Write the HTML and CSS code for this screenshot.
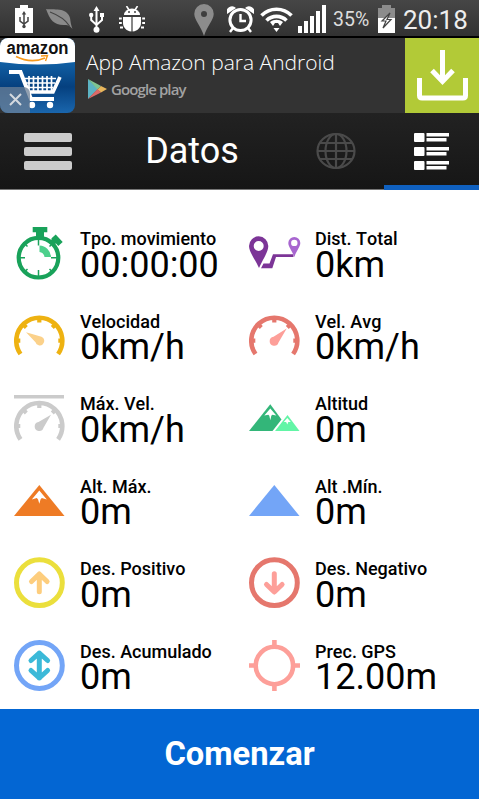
FILE: index.html
```html
<!DOCTYPE html>
<html lang="es">
<head>
  <meta charset="UTF-8">
  <meta name="viewport" content="width=device-width, initial-scale=1.0">
  <title>Datos</title>
  <link rel="stylesheet" href="styles.css">
</head>
<body>
  <!-- shared shapes -->
  <svg class="defs" width="0" height="0">
    <defs>
      <g id="gauge">
        <path d="M6.5 44A23 23 0 1 1 44.1 44" fill="none" stroke="currentColor" stroke-width="4.6"/>
        <path d="M3 30.7h3.300M44.300 30.7h3.300M10 15.3l2.300 2.300M40.6 15.3l-2.300 2.300M25.3 9v3.600" stroke="currentColor" stroke-width="4.2"/>
      </g>
    </defs>
  </svg>

  <div class="status-bar">
    <div class="status-left">
      <svg class="s-battery-usb" width="18" height="28" viewBox="0 0 18 28">
        <path d="M5 0h8v3h5v25H0V3h5z" fill="#fff"/>
        <path d="M9 8v14M5 12v4l4 3 4-3v-4" fill="none" stroke="#444" stroke-width="1.5"/>
        <path d="M9 6l2.2 3.5H6.8z" fill="#444"/><circle cx="9" cy="21.5" r="1.7" fill="#444"/>
      </svg>
      <svg class="s-leaf" width="27" height="22" viewBox="0 0 27 22">
        <path d="M0 1C7 2 21-1 24 10c.6 3 .5 5 2.5 11-3-4-5-4-9-4C8 17 4 12 0 1z" fill="#8a8a8a"/>
        <path d="M4 4c8 3 15 7 19.5 14" fill="none" stroke="#444" stroke-width="1.2"/>
      </svg>
      <svg class="s-usb" width="15" height="27" viewBox="0 0 15 27">
        <path d="M7.5 3v21M2.200 9v5l5.3 5L13 14V9" fill="none" stroke="#fff" stroke-width="2"/>
        <path d="M7.5 0l3 5h-6zM11 7h4v4h-4z" fill="#fff"/><circle cx="2.2" cy="9" r="2.2" fill="#fff"/><circle cx="7.5" cy="23.8" r="3" fill="#fff"/>
      </svg>
      <svg class="s-bug" width="26" height="26" viewBox="0 0 26 26">
        <path d="M5 9a8 6.500 0 0 1 16 0z" fill="#fff"/>
        <path d="M7.500 0l2.500 4M18.500 0L16 4" stroke="#fff" stroke-width="1.6"/>
        <path d="M0 12.500h2.800M23.200 12.500H26M0 17h2.800M23.200 17H26M1 21.500h3M22 21.500h3" stroke="#fff" stroke-width="2.200"/>
        <path d="M4 11h8.400v14.500C7 25 4 21 4 17zM13.600 11H22v6c0 4-3 8-8.400 8.500z" fill="#fff"/>
        <circle cx="10" cy="6" r="1" fill="#444"/><circle cx="16" cy="6" r="1" fill="#444"/>
      </svg>
    </div>
    <div class="status-right">
      <svg class="s-pin" width="20" height="32" viewBox="0 0 20 32">
        <path fill-rule="evenodd" d="M10 0a9.7 9.7 0 0 1 9.7 10C19.7 16 13 22 10 32 7 22 .3 16 .3 10A9.7 9.7 0 0 1 10 0zm0 7a3 3 0 1 0 0 6 3 3 0 0 0 0-6z" fill="#8c8c8c"/>
      </svg>
      <svg class="s-alarm" width="27" height="27" viewBox="0 0 27 27">
        <circle cx="13.5" cy="14" r="10.600" fill="none" stroke="#fff" stroke-width="3"/>
        <path d="M13.5 8v7h5.5M6 22l-3 4M21 22l3 4" fill="none" stroke="#fff" stroke-width="2.4"/>
        <path d="M0 8a5.5 5.5 0 0 1 9-6zM27 8a5.5 5.5 0 0 0-9-6z" fill="#fff"/>
      </svg>
      <svg class="s-wifi" width="33" height="26" viewBox="0 0 33 26">
        <path d="M1.5 9.5a21 21 0 0 1 30 0M6.5 14.5a14.2 14.2 0 0 1 20 0" fill="none" stroke="#fff" stroke-width="3.6"/>
        <path d="M10 16c4-3 9-3 13 0l-3 4-2-3h-3l-2 3zM13.5 22h6l-3 4z" fill="#fff"/>
      </svg>
      <svg class="s-signal" width="28" height="28" viewBox="0 0 28 28">
        <path d="M0 21h4v7H0zM6 16h4v12H6zM12 11h4v17h-4zM18 6h4v22h-4zM24 0h4v28h-4z" fill="#fff"/>
      </svg>
      <span class="percent">35%</span>
      <svg class="s-battery" width="17" height="28" viewBox="0 0 17 28">
        <path d="M4 0h9v3h4v10H0V3h4z" fill="#8c8c8c"/><path d="M0 13h17v15H0z" fill="#fff"/>
        <path d="M12 8l-8 8h4l-3 7 8-8.500H9z" fill="#fff" stroke="#444" stroke-width="1.2"/>
      </svg>
      <span class="clock">20:18</span>
    </div>
  </div>

  <div class="ad">
    <svg class="ad-logo" width="75" height="75" viewBox="0 0 75 75">
      <defs>
        <linearGradient id="blue" x1="0" y1="0" x2="0" y2="1">
          <stop offset=".3" stop-color="#1263a8"/><stop offset=".65" stop-color="#05407f"/><stop offset="1" stop-color="#1a66ad"/>
        </linearGradient>
        <clipPath id="round"><rect width="75" height="75" rx="8"/></clipPath>
      </defs>
      <g clip-path="url(#round)">
        <rect width="75" height="75" fill="url(#blue)"/>
        <path d="M0 0h75v24Q38 29 0 24z" fill="#fff"/>
        <text class="ad-brand" x="6.5" y="16" textLength="62" lengthAdjust="spacingAndGlyphs">amazon</text>
        <path d="M16 18.500q15 7.500 29 1.5" fill="none" stroke="#f79a1c" stroke-width="1.8"/>
        <path d="M41 18l6.5-.5-2 5.500" fill="none" stroke="#f79a1c" stroke-width="1.4"/>
        <path d="M9 34h11.5L31 61h23" fill="none" stroke="#fff" stroke-width="4"/>
        <path d="M29 54h24l7-15" fill="none" stroke="#fff" stroke-width="3.6"/>
        <path d="M25 40.5h31M26 45h29M28 49.5h25M29 38v15M33.5 38v15M38 38v15M42.5 38v15M47 38v15M51.5 38v15" stroke="#fff" stroke-width="1.7"/>
        <circle cx="32" cy="67" r="3.2" fill="#fff"/><circle cx="50" cy="67" r="3.2" fill="#fff"/>
        <path d="M0 49h23q7 0 7 7v19H0z" fill="#6b7f96" fill-opacity=".75"/>
        <path d="M10 56l11 11M21 56L10 67" stroke="#d4d9df" stroke-width="2"/>
      </g>
    </svg>
    <div class="ad-text">
      <div class="ad-title">App Amazon para Android</div>
      <div class="ad-store">
        <svg width="19" height="20" viewBox="0 0 19 20">
          <path d="M0 0l10 10L0 20z" fill="#5cb3c4"/><path d="M0 0l13 7-3.5 3.500z" fill="#7fc492"/>
          <path d="M13 7l6 3-6 3.5-3.500-3z" fill="#e8b65c"/><path d="M9.500 10l3.5 3.500L0 20z" fill="#dc6a67"/>
        </svg>
        <span>Google play</span>
      </div>
    </div>
    <div class="ad-download">
      <svg width="51" height="51" viewBox="0 0 51 51">
        <path d="M2.5 28v17.5q0 2.500 2.5 2.500h41q2.500 0 2.500-2.500V28" fill="none" stroke="#fff" stroke-width="5"/>
        <path d="M25.5 0v31M15 20.5L25.5 31.5 36 20.5" fill="none" stroke="#fff" stroke-width="5"/>
      </svg>
    </div>
  </div>

  <nav class="toolbar">
    <div class="menu"><i></i><i></i><i></i></div>
    <h1>Datos</h1>
    <div class="tab">
      <svg width="40" height="38" viewBox="0 0 40 38" fill="none" stroke="#4a4a4a" stroke-width="2.2">
        <ellipse cx="20" cy="19" rx="18.5" ry="17"/><ellipse cx="20" cy="19" rx="10.5" ry="17"/>
        <path d="M20 2v34M1.5 19h37M4 11h32M4 27h32"/>
      </svg>
    </div>
    <div class="tab active">
      <svg width="36" height="38" viewBox="0 0 36 38" fill="#fff">
        <rect y="1" width="10.5" height="9" rx="1"/><rect y="15" width="10.5" height="9" rx="1"/><rect y="29" width="10.5" height="9" rx="1"/>
        <path d="M12.5 1H35v3.500H12.500zM12.500 6h20v3.500h-20zM12.500 15H35v3.500H12.500zM12.500 20h20v3.500h-20zM12.500 29H35v3.500H12.500zM12.500 34h20v3.500h-20z"/>
      </svg>
    </div>
  </nav>

  <main class="stats">
    <div class="stat">
      <svg width="52" height="54" viewBox="0 0 52 54">
        <circle cx="24.5" cy="30.7" r="19.8" fill="none" stroke="#19a25a" stroke-width="4.2"/>
        <path d="M18.7 0h14.6v5.3h-3.3V10h-8V5.3h-3.3z" fill="#19a25a"/>
        <path d="M39.5 9.5l7 7.5M37 17l4-4" stroke="#19a25a" stroke-width="6"/>
        <path d="M24.5 13v5.5M24.5 43v6M6 30.7h5M37 30.7h6M11.5 17.5l2 2M37.5 17.5l-2 2M11.5 44l2-2M37.5 44l-2-2" stroke="#19a25a" stroke-width="1.5"/>
        <path d="M25.5 18.5A12 12 0 0 1 37 30h-6.5a6 6 0 0 0-5-5z" fill="#4dd08c"/>
      </svg>
      <div><div class="label">Tpo. movimiento</div><div class="value">00:00:00</div></div>
    </div>
    <div class="stat">
      <svg width="52" height="54" viewBox="0 0 52 54">
        <path fill-rule="evenodd" d="M9.7 9.3a9.7 9.7 0 0 1 9.6 9.7C19.3 25 14 32 10 41 6 32 0 25 0 19a9.7 9.7 0 0 1 9.7-9.7zm0 4.7a5 5 0 1 0 0 10 5 5 0 0 0 0-10z" fill="#7c3597"/>
        <path d="M12 41.3h11.3L27 30h17.5v-2.7H24l-3.5 9.2h-6z" fill="#7c3597"/>
        <path fill-rule="evenodd" d="M45.3 10a6 6 0 0 1 6 6c0 4-4 8-6 14-2-6-6-10-6-14a6 6 0 0 1 6-6zm0 2.7a3.2 3.2 0 1 0 0 6.4 3.2 3.2 0 0 0 0-6.4z" fill="#a866d0"/>
      </svg>
      <div><div class="label">Dist. Total</div><div class="value">0km</div></div>
    </div>

    <div class="stat">
      <svg width="52" height="54" viewBox="0 0 52 54" color="#eeb211">
        <use href="#gauge"/>
        <path d="M12 22.3L27.5 26.7a4.5 4.5 0 1 1-6 5.5z" fill="#fbd18a"/>
      </svg>
      <div><div class="label">Velocidad</div><div class="value">0km/h</div></div>
    </div>
    <div class="stat">
      <svg width="52" height="54" viewBox="0 0 52 54" color="#e5776d">
        <use href="#gauge"/>
        <path d="M37.7 18.5L29.5 32.5a4.5 4.5 0 1 1-5-5.7z" fill="#fd9f99"/>
      </svg>
      <div><div class="label">Vel. Avg</div><div class="value">0km/h</div></div>
    </div>

    <div class="stat">
      <svg width="52" height="54" viewBox="0 0 52 54" color="#cbcbcb">
        <path d="M0 3h50v3.6H0z" fill="currentColor"/>
        <g transform="translate(0 3.3)">
          <use href="#gauge"/>
          <path d="M37 19.5L29.5 32.5a4.5 4.5 0 1 1-5-5.7z" fill="currentColor"/>
        </g>
      </svg>
      <div><div class="label">Máx. Vel.</div><div class="value">0km/h</div></div>
    </div>
    <div class="stat">
      <svg width="52" height="54" viewBox="0 0 52 54">
        <path d="M21.3 12.3L0 39h23.5l9-11.5z" fill="#33b679"/>
        <path d="M38.5 23L26 39h24.5z" fill="#62f5a6"/>
        <path d="M21.3 16.5l-6 7 4-.8 1 1 1 4.500 1-4.500 1-1 4 .8z" fill="#fff"/>
        <path d="M38.300 26l-3.500 4h2.300l1.200 2.500 1-2.500h2.500z" fill="#fff"/>
      </svg>
      <div><div class="label">Altitud</div><div class="value">0m</div></div>
    </div>

    <div class="stat">
      <svg width="52" height="54" viewBox="0 0 52 54">
        <path d="M25.3 10L0 41h50.5z" fill="#ee7b25"/>
        <path d="M25.3 15.5l-7.500 9 5-1.500 1.300 1.500 1.200 4.300 1.200-4.300 1.300-1.500 5 1.500z" fill="#fff"/>
      </svg>
      <div><div class="label">Alt. Máx.</div><div class="value">0m</div></div>
    </div>
    <div class="stat">
      <svg width="52" height="54" viewBox="0 0 52 54">
        <path d="M25.3 10L0 41h50.5z" fill="#73a5f7"/>
      </svg>
      <div><div class="label">Alt .Mín.</div><div class="value">0m</div></div>
    </div>

    <div class="stat">
      <svg width="52" height="54" viewBox="0 0 52 54" fill="none">
        <circle cx="25.4" cy="25.7" r="22.9" stroke="#ebdf3c" stroke-width="5"/>
        <path d="M25.3 34.7V17M17.500 24.500l7.800-7.500 7.800 7.500" stroke="#fdcd7d" stroke-width="5" stroke-linecap="round" stroke-linejoin="round"/>
      </svg>
      <div><div class="label">Des. Positivo</div><div class="value">0m</div></div>
    </div>
    <div class="stat">
      <svg width="52" height="54" viewBox="0 0 52 54" fill="none">
        <circle cx="25.4" cy="25.7" r="22.9" stroke="#e5776d" stroke-width="5"/>
        <path d="M25.3 16.700v18M17.500 27.500l7.800 7.500 7.800-7.500" stroke="#fd9f99" stroke-width="5" stroke-linecap="round" stroke-linejoin="round"/>
      </svg>
      <div><div class="label">Des. Negativo</div><div class="value">0m</div></div>
    </div>

    <div class="stat">
      <svg width="52" height="54" viewBox="0 0 52 54" fill="none">
        <circle cx="25.4" cy="25.5" r="22.9" stroke="#73a5f7" stroke-width="5"/>
        <path d="M25.3 13v25M17 20.500l8.300-7.500 8.300 7.500M17 30.500l8.300 7.500 8.300-7.500" stroke="#3bb9d8" stroke-width="5" stroke-linecap="round" stroke-linejoin="round"/>
      </svg>
      <div><div class="label">Des. Acumulado</div><div class="value">0m</div></div>
    </div>
    <div class="stat">
      <svg width="52" height="54" viewBox="0 0 52 54" fill="none" stroke="#fd9f99">
        <circle cx="25.4" cy="25.5" r="18.7" stroke-width="4.6"/>
        <path d="M25.4 0v6M25.4 45v6M0 25.5h6M45 25.5h6" stroke-width="4.6"/>
      </svg>
      <div><div class="label">Prec. GPS</div><div class="value">12.00m</div></div>
    </div>
  </main>

  <button class="start">Comenzar</button>
</body>
</html>
```
FILE: styles.css
```css
* {
  box-sizing: border-box;
}
body {
  margin: 0;
  height: 799px;
  display: flex;
  flex-direction: column;
  overflow: hidden;
  font-family: Roboto, sans-serif;
  background: #fff;
  color: #000;
}
svg {
  display: block;
  flex: none;
}
.defs {
  position: absolute;
}
.status-bar {
  height: 38px;
  display: flex;
  justify-content: space-between;
  padding: 2px 10px 0 15px;
  background: linear-gradient(#464646, #323232);
  border-bottom: 2px solid #000;
  color: #fff;
}
.status-left,
.status-right {
  display: flex;
  align-items: center;
}
.s-leaf {
  margin-left: 13px;
}
.s-usb {
  margin-left: 16px;
}
.s-bug {
  margin-left: 15px;
}
.s-pin {
  margin-top: 1px;
}
.s-alarm {
  margin-left: 13px;
}
.s-wifi {
  margin-left: 6px;
}
.s-signal {
  margin-left: 5px;
}
.percent {
  width: 38px;
  margin: 2px 7px 0;
  font-size: 19.5px;
  line-height: 24px;
  color: #ddd;
}
.s-battery {
  margin-right: 8px;
}
.clock {
  width: 66px;
  margin-top: 1px;
  font-size: 26px;
  line-height: 30px;
  color: #eee;
}
.ad {
  height: 75px;
  display: flex;
  background: #333;
}
.ad-brand {
  font: bold 18px "Liberation Sans", sans-serif;
  fill: #111;
}
.ad-text {
  flex: 1;
  padding: 8px 0 0 11px;
}
.ad-title {
  font: 300 21px/32px "Open Sans", sans-serif;
  color: #fff;
  white-space: nowrap;
}
.ad-store {
  display: flex;
  align-items: center;
  gap: 4px;
  padding-left: 2px;
  font: 600 15px/22px "Open Sans", sans-serif;
  letter-spacing: -0.9px;
  color: #a2a2a2;
}
.ad-download {
  width: 74px;
  display: flex;
  justify-content: center;
  padding-top: 12px;
  background: #b2ca37;
}
.toolbar {
  height: 77px;
  display: flex;
  align-items: stretch;
  background: linear-gradient(#222, #161616);
  border-bottom: 1px solid #777;
}
.menu {
  width: 96px;
  flex: none;
  display: flex;
  flex-direction: column;
  align-items: center;
  gap: 5px;
  padding-top: 20px;
}
.menu i {
  width: 48px;
  height: 9px;
  border-radius: 2px;
  background: #ccc;
}
.toolbar h1 {
  width: 192px;
  flex: none;
  margin: 0;
  text-align: center;
  font-size: 36px;
  font-weight: 400;
  line-height: 77px;
  color: #fff;
}
.tab {
  width: 96px;
  flex: none;
  height: 77px;
  display: flex;
  justify-content: center;
  padding-top: 19px;
}
.tab.active {
  width: 95px;
  border-bottom: 5px solid #0f60bf;
}
.stats {
  height: 519px;
  display: grid;
  grid-template-columns: 235px 1fr;
  grid-template-rows: repeat(3, 83px 82px);
  padding: 22px 0 0 14px;
}
.stat {
  display: flex;
  gap: 14px;
  padding-top: 15px;
  white-space: nowrap;
}
.label {
  padding-top: 1px;
  font-size: 18px;
  font-weight: 500;
  font-kerning: none;
  line-height: 22px;
}
.value {
  font-size: 36px;
  line-height: 42px;
  margin-top: -7px;
}
/* taller rows sit 1px lower */
.stat:nth-child(4n+1) .value,
.stat:nth-child(4n+2) .value {
  margin-top: -6px;
}
.start {
  flex: none;
  height: 90px;
  border: 0;
  padding: 0;
  background: #0366d3;
  color: #fff;
  font: bold 32.7px Roboto, sans-serif;
}
```
